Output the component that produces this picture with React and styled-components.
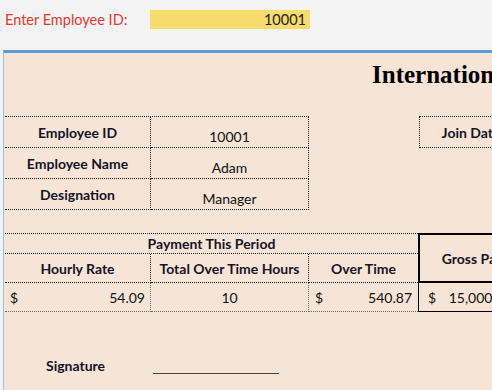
import React from 'react';
import styled, { createGlobalStyle } from 'styled-components';

const GlobalStyle = createGlobalStyle`
  html, body {
    margin: 0;
    padding: 0;
    width: 492px;
    height: 390px;
    overflow: hidden;
    background: #f3f3f3;
  }
  body {
    font-family: Lato, "Open Sans", sans-serif;
    color: #111;
  }
`;

const TopBar = styled.div`
  display: flex;
  align-items: flex-start;
  height: 50px;
  padding-top: 10px;
  box-sizing: border-box;
`;

const IdLabel = styled.div`
  width: 145px;
  padding-left: 5px;
  line-height: 19px;
  font-size: 14.5px;
  color: #e5372f;
`;

const IdInput = styled.div`
  width: 160px;
  height: 19px;
  line-height: 19px;
  background: #f5dc6c;
  text-align: right;
  padding-right: 4px;
  box-sizing: border-box;
  font-size: 14.5px;
  color: #222;
`;

const Sheet = styled.div`
  margin-left: 3px;
  height: 340px;
  box-sizing: border-box;
  border-top: 3px solid #5b9bd5;
  border-left: 1px solid #9cc0e4;
  background: #f6e5d6;
  overflow: hidden;
`;

const Title = styled.div`
  margin-top: 9px;
  padding-left: 368px;
  white-space: nowrap;
  font-family: "Liberation Serif", serif;
  font-weight: bold;
  font-size: 25px;
  line-height: 1;
  color: #000;
`;

const InfoRow = styled.div`
  display: flex;
  align-items: flex-start;
  margin-top: 29px;
  padding-left: 1px;
`;

const InfoGrid = styled.div`
  display: grid;
  grid-template-columns: 146px 158px;
  border-top: 1px dotted #222;
  flex-shrink: 0;
`;

const InfoCell = styled.div`
  height: 31px;
  box-sizing: border-box;
  display: flex;
  justify-content: center;
  align-items: ${p => (p.$label ? 'center' : 'flex-end')};
  padding-bottom: ${p => (p.$label ? '0' : '2px')};
  border-bottom: 1px dotted #222;
  border-right: 1px dotted #222;
  font-size: 14px;
  font-weight: ${p => (p.$label ? 700 : 400)};
  color: ${p => (p.$label ? '#141428' : '#111')};
`;

const JoinBox = styled.div`
  flex-shrink: 0;
  margin-left: 110px;
  width: 104px;
  height: 32px;
  box-sizing: border-box;
  border: 1px dotted #222;
  display: flex;
  align-items: center;
  justify-content: center;
  font-size: 14px;
  font-weight: 700;
  color: #141428;
`;

const PayGrid = styled.div`
  display: grid;
  grid-template-columns: 146px 158px 109px 109px;
  grid-template-rows: 21px 29px 29px;
  margin-top: 23px;
  margin-left: 1px;
  width: 522px;
`;

const PayCell = styled.div`
  box-sizing: border-box;
  display: flex;
  align-items: center;
  justify-content: ${p => p.$justify || 'center'};
  padding: 0 ${p => p.$pad || 0}px;
  border-bottom: 1px dotted ${p => (p.$fine ? '#6a6a6a' : '#222')};
  border-right: ${p => (p.$noRight ? 'none' : `1px dotted ${p.$fine ? '#6a6a6a' : '#222'}`)};
  border-top: ${p => (p.$top ? '1px dotted #222' : 'none')};
  font-size: 14px;
  font-weight: ${p => (p.$head ? 700 : 400)};
  color: ${p => (p.$head ? '#141428' : '#111')};
`;

const GrossHead = styled.div`
  grid-column: 4;
  grid-row: 1 / 3;
  box-sizing: border-box;
  border: 2px solid #000;
  display: flex;
  align-items: center;
  justify-content: center;
  font-size: 14px;
  font-weight: 700;
  color: #141428;
`;

const GrossValue = styled.div`
  box-sizing: border-box;
  border: 1px solid #000;
  border-top: none;
  display: flex;
  align-items: center;
  justify-content: space-between;
  padding: 0 14px 0 9px;
  font-size: 14px;
`;

const SignRow = styled.div`
  display: flex;
  align-items: flex-start;
  margin-top: 45px;
  padding-left: 42px;
`;

const SignLabel = styled.div`
  width: 107px;
  line-height: 18px;
  font-size: 14px;
  font-weight: 700;
  color: #141428;
`;

const SignLine = styled.div`
  width: 126px;
  height: 1px;
  margin-top: 16px;
  background: #444;
`;

const info = [
  ['Employee ID', '10001'],
  ['Employee Name', 'Adam'],
  ['Designation', 'Manager'],
];

export default function App() {
  return (
    <>
      <GlobalStyle />
      <TopBar>
        <IdLabel>Enter Employee ID:</IdLabel>
        <IdInput>10001</IdInput>
      </TopBar>
      <Sheet>
        <Title>International Company</Title>
        <InfoRow>
          <InfoGrid>
            {info.map(([label, value]) => (
              <React.Fragment key={label}>
                <InfoCell $label>{label}</InfoCell>
                <InfoCell>{value}</InfoCell>
              </React.Fragment>
            ))}
          </InfoGrid>
          <JoinBox>Join Date</JoinBox>
        </InfoRow>
        <PayGrid>
          <PayCell $head $top $noRight style={{ gridColumn: '1 / 4' }}>
            Payment This Period
          </PayCell>
          <GrossHead>Gross Pay</GrossHead>
          <PayCell $head>Hourly Rate</PayCell>
          <PayCell $head>Total Over Time Hours</PayCell>
          <PayCell $head $noRight>Over Time</PayCell>
          <PayCell $fine $justify="space-between" $pad={5}>
            <span>$</span>
            <span>54.09</span>
          </PayCell>
          <PayCell $fine>10</PayCell>
          <PayCell $fine $noRight $justify="space-between" $pad={6}>
            <span>$</span>
            <span>540.87</span>
          </PayCell>
          <GrossValue>
            <span>$</span>
            <span>15,000.00</span>
          </GrossValue>
        </PayGrid>
        <SignRow>
          <SignLabel>Signature</SignLabel>
          <SignLine />
        </SignRow>
      </Sheet>
    </>
  );
}
